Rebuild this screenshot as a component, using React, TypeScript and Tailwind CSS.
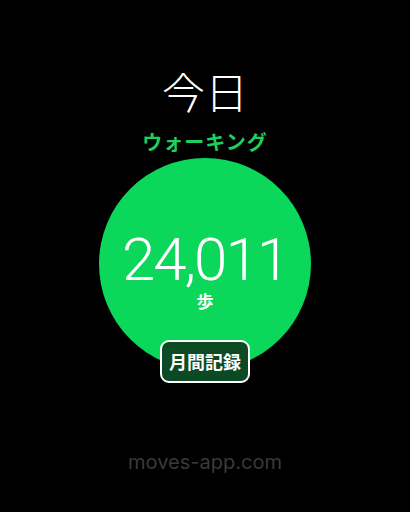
export default function App() {
  return (
    <div
      className="flex h-[512px] w-[410px] flex-col items-center bg-black"
      style={{ fontFamily: '"Noto Sans CJK JP", "Noto Sans", sans-serif' }}
    >
      <div className="mt-[63px] text-[43px] font-light leading-[54px] text-white">今日</div>
      <div className="mt-[12px] text-[20px] font-bold leading-[26px] tracking-[1px] text-[#1fcf5c]">
        ウォーキング
      </div>
      <div className="relative mt-[3px] flex h-[212px] w-[212px] flex-col items-center rounded-full bg-[#0bd75a]">
        <div
          className="mt-[73px] text-[60px] font-light leading-[58px] tracking-[-2px] text-white"
          style={{ fontFamily: 'Roboto, "Noto Sans", sans-serif' }}
        >
          24,011
        </div>
        <div className="mt-[2px] text-[17px] font-bold leading-[20px] text-white">歩</div>
        <div className="absolute top-[182px] flex h-[43px] w-[90px] items-center justify-center rounded-[9px] border-2 border-white bg-[#0b4a22] text-[18px] font-bold text-white">
          月間記録
        </div>
      </div>
      <div
        className="mt-[79px] text-[20px] leading-[26px] text-[#3a3a3a]"
        style={{ fontFamily: '"Inter", "Noto Sans", sans-serif' }}
      >
        moves-app.com
      </div>
    </div>
  );
}
